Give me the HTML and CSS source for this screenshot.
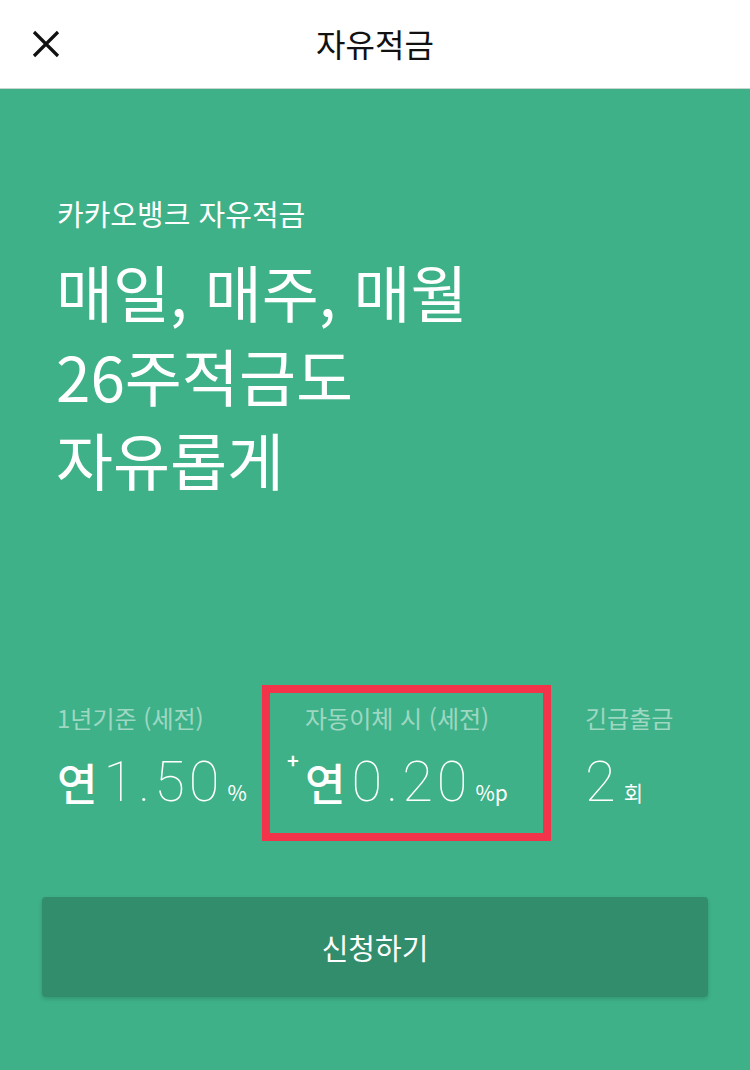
FILE: index.html
```html
<!DOCTYPE html>
<html lang="ko">
<head>
    <meta charset="UTF-8">
    <meta name="viewport" content="width=device-width, initial-scale=1.0">
    <title>자유적금</title>
    <link rel="stylesheet" href="styles.css">
</head>
<body>
    <header class="topbar">
        <button class="close-btn" aria-label="닫기">
            <svg width="30" height="30" viewBox="0 0 30 30">
                <path d="M3 3 L27 27 M27 3 L3 27" stroke="#111" stroke-width="3.2" fill="none"/>
            </svg>
        </button>
        <div class="topbar-title">자유적금</div>
    </header>

    <main class="hero">
        <p class="hero-sub">카카오뱅크 자유적금</p>
        <h1 class="hero-title">매일, 매주, 매월<br>26주적금도<br>자유롭게</h1>

        <div class="stats">
            <div class="stat stat-rate">
                <div class="stat-label">1년기준 (세전)</div>
                <div class="stat-value"><span class="unit-pre">연</span><span class="num">1.50</span><span class="unit">%</span></div>
            </div>
            <div class="stat stat-bonus">
                <div class="stat-label">자동이체 시 (세전)</div>
                <div class="stat-value"><span class="plus">+</span><span class="unit-pre">연</span><span class="num">0.20</span><span class="unit">%p</span></div>
            </div>
            <div class="stat stat-count">
                <div class="stat-label">긴급출금</div>
                <div class="stat-value"><span class="num">2</span><span class="unit">회</span></div>
            </div>
        </div>

        <button class="apply-btn">신청하기</button>
    </main>
</body>
</html>
```

FILE: styles.css
```css
:root {
    --kb-green: #3eb188;
    --kb-green-dark: #328d6c;
    --kb-label: rgba(255, 255, 255, 0.5);
    --kb-red: #f2334a;
}

* {
    box-sizing: border-box;
}

html, body {
    margin: 0;
    padding: 0;
}

body {
    font-family: "Noto Sans CJK KR", "Noto Sans", sans-serif;
    background-color: var(--kb-green);
    color: #fff;
    height: 1070px;
    overflow: hidden;
}

.topbar {
    height: 89px;
    background: #fff;
    border-bottom: 1px solid #c9d6d0;
    display: flex;
    align-items: center;
    justify-content: center;
    position: relative;
}

.close-btn {
    position: absolute;
    left: 31px;
    top: 29px;
    background: none;
    border: none;
    padding: 0;
    width: 30px;
    height: 30px;
}

.topbar-title {
    color: #111;
    font-size: 32px;
    margin-top: -2px;
}

.hero {
    padding: 106px 42px 0 42px;
}

.hero-sub {
    margin: 0 0 0 15px;
    font-size: 29px;
    line-height: 36px;
}

.hero-title {
    margin: 18px 0 0 14px;
    font-size: 62px;
    font-weight: 400;
    line-height: 84px;
}

.stats {
    display: flex;
    margin-top: 184px;
}

.stat {
    padding-top: 18px;
}

.stat-rate {
    width: 220px;
    padding-left: 15px;
}

.stat-bonus {
    width: 289px;
    height: 156px;
    border: 8px solid var(--kb-red);
    padding: 10px 0 0 35px;
    position: relative;
}

.stat-count {
    padding-left: 34px;
}

.stat-label {
    font-size: 24px;
    line-height: 30px;
    color: var(--kb-label);
}

.stat-value {
    display: flex;
    align-items: baseline;
    margin-top: 16px;
    height: 60px;
    position: relative;
}

.unit-pre {
    font-size: 44px;
    font-weight: 500;
    margin-right: 6px;
}

.num {
    font-family: Roboto, "Liberation Sans", sans-serif;
    font-weight: 100;
    font-size: 56px;
    letter-spacing: 4px;
}

.unit {
    font-size: 21px;
    margin-left: 4px;
}

.plus {
    position: absolute;
    left: -18px;
    top: -4px;
    font-size: 20px;
    font-weight: 700;
}

.apply-btn {
    display: block;
    width: 666px;
    height: 100px;
    margin-top: 56px;
    background: var(--kb-green-dark);
    border: none;
    border-radius: 4px;
    box-shadow: 0 2px 4px rgba(0, 0, 0, 0.15);
    color: #fff;
    font-family: "Noto Sans CJK KR", sans-serif;
    font-size: 29px;
}
```
